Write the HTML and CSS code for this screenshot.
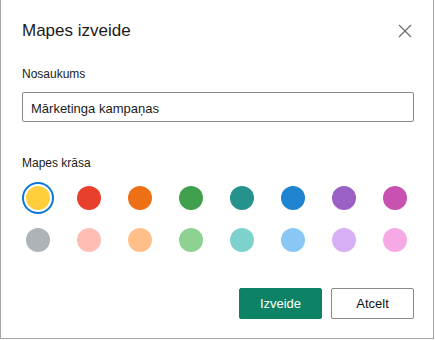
FILE: index.html
```html
<!DOCTYPE html>
<html lang="lv">
<head>
  <meta charset="UTF-8" />
  <meta name="viewport" content="width=device-width, initial-scale=1.0" />
  <title>Mapes izveide</title>
  <link rel="stylesheet" href="styles.css">
</head>
<body>
  <div class="dialog">
    <div class="header">
      <h1 class="title">Mapes izveide</h1>
      <button class="close" aria-label="Aizvērt">
        <svg width="14" height="14" viewBox="0 0 14 14">
          <path d="M1 1 L13 13 M13 1 L1 13" stroke="#6b6b6b" stroke-width="1.2" fill="none" />
        </svg>
      </button>
    </div>
    <label class="label" for="folderName">Nosaukums</label>
    <input type="text" id="folderName" class="name-input" value="Mārketinga kampaņas" />
    <div class="label color-label">Mapes krāsa</div>
    <div class="swatches">
      <button class="swatch selected"><span style="background:#ffce3b"></span></button>
      <button class="swatch"><span style="background:#e8402d"></span></button>
      <button class="swatch"><span style="background:#ee7014"></span></button>
      <button class="swatch"><span style="background:#40a04d"></span></button>
      <button class="swatch"><span style="background:#25928b"></span></button>
      <button class="swatch"><span style="background:#1e84d0"></span></button>
      <button class="swatch"><span style="background:#9a60c5"></span></button>
      <button class="swatch"><span style="background:#c952b1"></span></button>
      <button class="swatch"><span style="background:#adb3b6"></span></button>
      <button class="swatch"><span style="background:#ffbdb3"></span></button>
      <button class="swatch"><span style="background:#ffbf89"></span></button>
      <button class="swatch"><span style="background:#8ed292"></span></button>
      <button class="swatch"><span style="background:#7dd2ce"></span></button>
      <button class="swatch"><span style="background:#89c7f7"></span></button>
      <button class="swatch"><span style="background:#d6aff4"></span></button>
      <button class="swatch"><span style="background:#f6a9e5"></span></button>
    </div>
    <div class="actions">
      <button class="btn primary">Izveide</button>
      <button class="btn">Atcelt</button>
    </div>
  </div>
</body>
</html>
```

FILE: styles.css
```css
* {
  box-sizing: border-box;
}
body {
  margin: 0;
  font-family: "Liberation Sans", Arial, sans-serif;
  background: #fff;
  color: #222;
}
.dialog {
  width: 434px;
  height: 339px;
  border: 1px solid #a6a6a6;
  border-top: none;
  padding: 0 19px 0 21px;
  display: flex;
  flex-direction: column;
}
.header {
  display: flex;
  justify-content: space-between;
  align-items: center;
  padding-top: 19px;
  height: 42px;
}
.title {
  margin: 0;
  font-size: 17px;
  font-weight: normal;
  color: #1b1b1b;
}
.close {
  border: none;
  background: none;
  padding: 0;
  width: 14px;
  height: 14px;
  margin-right: 2px;
  cursor: pointer;
}
.close svg {
  display: block;
}
.label {
  font-size: 12px;
  color: #1b1b1b;
  margin-top: 24px;
  line-height: 16px;
}
.name-input {
  margin-top: 10px;
  height: 30px;
  width: 100%;
  border: 1px solid #8a8a8a;
  border-radius: 2px;
  padding: 2px 8px 0;
  font-family: inherit;
  font-size: 13px;
  color: #1b1b1b;
}
.color-label {
  margin-top: 33px;
}
.swatches {
  display: grid;
  grid-template-columns: repeat(8, 32px);
  column-gap: 19px;
  row-gap: 10px;
  margin-top: 11px;
}
.swatch {
  width: 32px;
  height: 32px;
  border: 2px solid transparent;
  border-radius: 50%;
  background: none;
  padding: 2px;
  cursor: pointer;
}
.swatch span {
  display: block;
  width: 24px;
  height: 24px;
  border-radius: 50%;
}
.swatch.selected {
  border-color: #0a78d4;
}
.actions {
  display: flex;
  justify-content: flex-end;
  gap: 9px;
  margin-top: 32px;
}
.btn {
  width: 83px;
  height: 31px;
  border: 1px solid #8a8a8a;
  border-radius: 2px;
  background: #fff;
  font-family: inherit;
  font-size: 13px;
  color: #111;
  cursor: pointer;
}
.btn.primary {
  background: #0e8264;
  border-color: #0e8264;
  color: #fff;
}
```
